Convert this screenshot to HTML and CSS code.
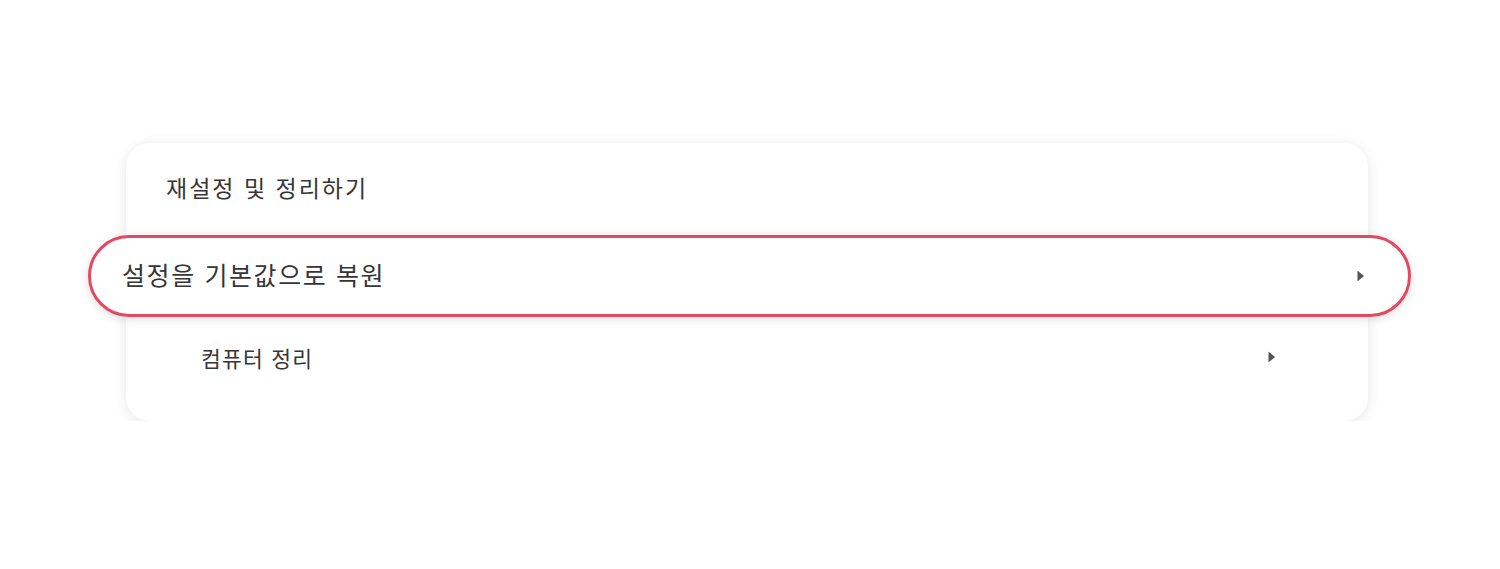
FILE: index.html
```html
<!DOCTYPE html>
<html lang="ko">
<head>
<meta charset="utf-8">
<link rel="stylesheet" href="styles.css">
</head>
<body>
<div class="page">
  <div class="card">
    <div class="title">재설정 및 정리하기</div>
    <div class="row row-hl">
      <span class="label">설정을 기본값으로 복원</span>
      <svg class="arrow" width="9" height="14" viewBox="0 0 9 14"><polygon points="1.5,1.5 8,7 1.5,12.5" fill="#555"/></svg>
    </div>
    <div class="row row-sub">
      <span class="label">컴퓨터 정리</span>
      <svg class="arrow" width="9" height="14" viewBox="0 0 9 14"><polygon points="1.5,1.5 8,7 1.5,12.5" fill="#555"/></svg>
    </div>
  </div>
</div>
</body>
</html>
```

FILE: styles.css
```css
html, body {
  margin: 0;
  padding: 0;
  background: #ffffff;
}
body {
  font-family: "Noto Sans CJK KR", "Noto Sans", sans-serif;
  color: #363636;
}
.page {
  padding-top: 143px;
  padding-left: 126px;
}
.card {
  width: 1242px;
  height: 278px;
  box-sizing: border-box;
  background: #fff;
  border-radius: 24px;
  box-shadow: 0 2px 14px rgba(0, 0, 0, 0.10);
  display: flex;
  flex-direction: column;
}
.title {
  height: 92px;
  display: flex;
  align-items: center;
  padding-left: 40px;
  padding-bottom: 4px;
  box-sizing: border-box;
  font-size: 23px;
  letter-spacing: 2px;
}
.row {
  display: flex;
  align-items: center;
  justify-content: space-between;
}
.row-hl {
  height: 82px;
  box-sizing: border-box;
  margin-left: -38px;
  margin-right: -43px;
  border: 3px solid #e34a62;
  border-radius: 41px;
  background: #fff;
  box-shadow: 0 2px 10px rgba(0, 0, 0, 0.14);
  padding-left: 31px;
  padding-right: 43px;
  font-size: 25px;
  letter-spacing: 1.6px;
  position: relative;
}
.row-hl .label {
  margin-top: -4px;
}
.row-sub {
  height: 80px;
  padding-left: 75px;
  padding-right: 92px;
  font-size: 21.5px;
  letter-spacing: 1.2px;
}
.arrow {
  display: block;
  flex: none;
}
```
